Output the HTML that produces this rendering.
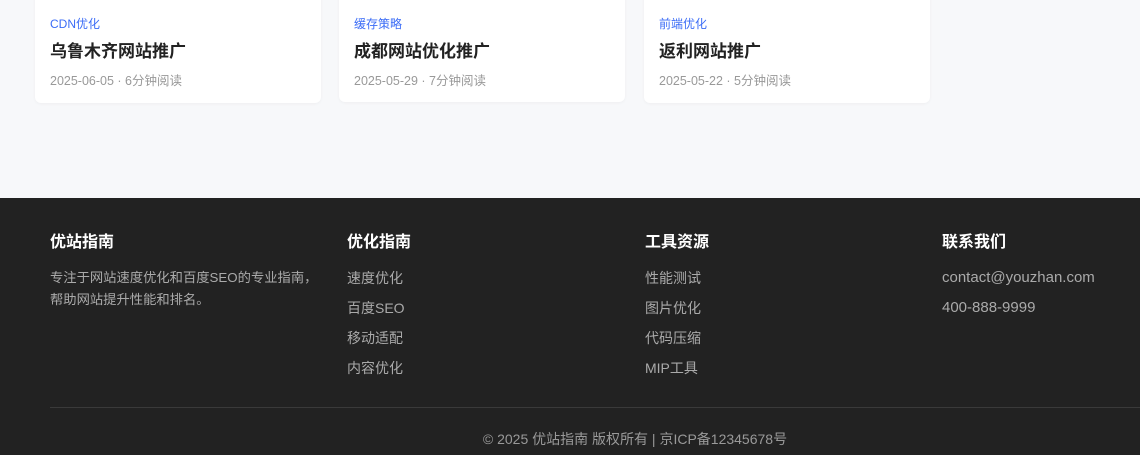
<!DOCTYPE html>
<html><head><meta charset="utf-8"><style>
*{margin:0;padding:0;box-sizing:border-box}
body{width:1140px;height:455px;overflow:hidden;background:#f7f8fa;font-family:"Liberation Sans","Noto Sans CJK SC",sans-serif;position:relative}
.card{position:absolute;top:-20px;height:123px;width:286px;background:#fff;border-radius:6px;box-shadow:0 1px 3px rgba(0,0,0,.04)}
.tag{position:absolute;top:35px;left:15px;font-size:12px;color:#3b6cf6}
.t{position:absolute;top:57px;left:15px;font-size:17px;font-weight:bold;color:#222}
.d{position:absolute;top:90px;left:15px;font-size:12.5px;color:#999}
footer{position:absolute;top:198px;left:0;width:1140px;height:257px;background:#222}
.col{position:absolute;top:35px}
.col h4{font-size:16px;color:#fff;font-weight:bold;height:20px;line-height:20px}
.col p{font-size:13.3px;color:#aaa;line-height:22px;margin-top:14px}
.col ul{list-style:none;margin-top:14px}
.col li{font-size:14px;color:#aaa;height:30px;line-height:22px}
.col.c li{font-size:15px}
.hr{position:absolute;top:209px;left:50px;width:1170px;height:1px;background:#3a3a3a}
.cp{position:absolute;top:231px;left:50px;width:1170px;text-align:center;font-size:14px;color:#999}
</style></head><body>
<div class="card" style="left:35px"><div class="tag">CDN优化</div><div class="t">乌鲁木齐网站推广</div><div class="d">2025-06-05 · 6分钟阅读</div></div>
<div class="card" style="left:339px;height:122px"><div class="tag">缓存策略</div><div class="t">成都网站优化推广</div><div class="d">2025-05-29 · 7分钟阅读</div></div>
<div class="card" style="left:644px"><div class="tag">前端优化</div><div class="t">返利网站推广</div><div class="d">2025-05-22 · 5分钟阅读</div></div>
<footer>
<div class="col" style="left:50px"><h4>优站指南</h4><p>专注于网站速度优化和百度SEO的专业指南，<br>帮助网站提升性能和排名。</p></div>
<div class="col" style="left:347px"><h4>优化指南</h4><ul><li>速度优化</li><li>百度SEO</li><li>移动适配</li><li>内容优化</li></ul></div>
<div class="col" style="left:645px"><h4>工具资源</h4><ul><li>性能测试</li><li>图片优化</li><li>代码压缩</li><li>MIP工具</li></ul></div>
<div class="col c" style="left:942px"><h4>联系我们</h4><ul><li>contact@youzhan.com</li><li>400-888-9999</li></ul></div>
<div class="hr"></div>
<div class="cp">© 2025 优站指南 版权所有 | 京ICP备12345678号</div>
</footer>
</body></html>
